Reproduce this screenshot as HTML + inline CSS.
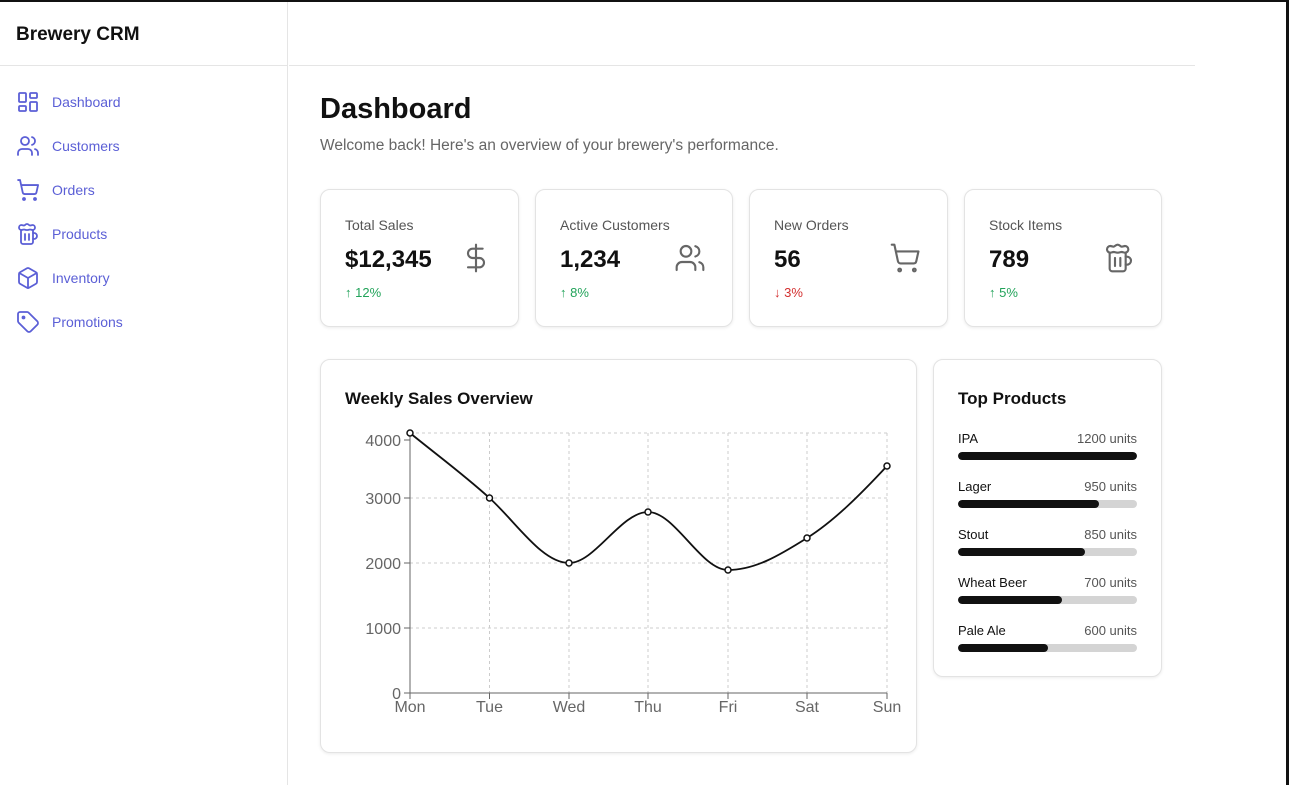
<!DOCTYPE html>
<html><head><meta charset="utf-8"><style>
*{box-sizing:border-box;margin:0;padding:0}
body{width:1289px;height:785px;overflow:hidden;background:#fff;font-family:"Liberation Sans",sans-serif;position:relative}
.frame-top{position:absolute;left:0;top:0;width:1289px;height:2px;background:#111}
.frame-right{position:absolute;right:0;top:0;width:3px;height:785px;background:#111}
.side{position:absolute;left:0;top:2px;width:288px;height:783px;border-right:1px solid #e5e5e5}
.brand{height:64px;border-bottom:1px solid #e5e5e5;font-weight:bold;font-size:19px;padding:22px 16px;color:#111}
.nav a{display:flex;align-items:center;height:44px;padding-left:16px;color:#5b5fd6;font-size:14px;text-decoration:none}
.nav a svg{width:24px;height:24px;margin-right:12px;stroke:#5b5fd6;fill:none;stroke-width:1.8;stroke-linecap:round;stroke-linejoin:round}
.nav{padding-top:14px}
.topbar{position:absolute;left:289px;top:2px;width:906px;height:64px;border-bottom:1px solid #e5e5e5}
h1{position:absolute;left:320px;top:93px;font-size:29px;font-weight:bold;color:#111}
.sub{position:absolute;left:320px;top:137px;font-size:15.5px;color:#666}
.card{position:absolute;background:#fff;border:1px solid #e3e3e3;border-radius:10px;box-shadow:0 1px 3px rgba(0,0,0,.08)}
.stat .l{position:absolute;left:24px;top:27px;font-size:14px;color:#555}
.stat .v{position:absolute;left:24px;top:56px;font-size:24px;font-weight:bold;color:#111}
.stat .c{position:absolute;left:24px;top:95px;font-size:13px}
.stat svg{position:absolute;right:26px;top:52px;width:32px;height:32px;stroke:#666;fill:none;stroke-width:1.6;stroke-linecap:round;stroke-linejoin:round}
.up{color:#22a35a}.down{color:#d32f2f}
.ttl{position:absolute;left:24px;top:29px;font-size:17px;font-weight:bold;color:#111}
.prod{position:absolute;left:24px;width:179px;font-size:13px}
.prod .n{color:#111}.prod .u{position:absolute;right:0;top:0;color:#555}
.bar{margin-top:6px;height:8px;background:#d4d4d4;border-radius:4px;overflow:hidden}
.bar div{height:8px;background:#111;border-radius:4px}
</style></head><body>
<div class="frame-top"></div><div class="frame-right"></div>
<div class="side">
<div class="brand">Brewery CRM</div>
<div class="nav">
<a><svg viewBox="0 0 24 24"><rect x="3" y="3" width="7" height="9" rx="1"/><rect x="14" y="3" width="7" height="5" rx="1"/><rect x="14" y="12" width="7" height="9" rx="1"/><rect x="3" y="16" width="7" height="5" rx="1"/></svg>Dashboard</a>
<a><svg viewBox="0 0 24 24"><path d="M16 21v-2a4 4 0 0 0-4-4H6a4 4 0 0 0-4 4v2"/><circle cx="9" cy="7" r="4"/><path d="M22 21v-2a4 4 0 0 0-3-3.87M16 3.13a4 4 0 0 1 0 7.75"/></svg>Customers</a>
<a><svg viewBox="0 0 24 24"><circle cx="8" cy="21" r="1"/><circle cx="19" cy="21" r="1"/><path d="M2.05 2.05h2l2.66 12.42a2 2 0 0 0 2 1.58h9.78a2 2 0 0 0 1.95-1.57l1.65-7.43H5.12"/></svg>Orders</a>
<a><svg viewBox="0 0 24 24"><path d="M17 11h1a3 3 0 0 1 0 6h-1M9 12v6M13 12v6M14 7.5c-1 0-1.44.5-3 .5s-2-.5-3-.5-1.72.5-2.5.5a2.5 2.5 0 0 1 0-5c.78 0 1.57.5 2.5.5S9.44 2 11 2s2 1.5 3 1.5 1.72-.5 2.5-.5a2.5 2.5 0 0 1 0 5c-.78 0-1.5-.5-2.5-.5Z"/><path d="M5 8v12a2 2 0 0 0 2 2h8a2 2 0 0 0 2-2V8"/></svg>Products</a>
<a><svg viewBox="0 0 24 24"><path d="M21 8a2 2 0 0 0-1-1.73l-7-4a2 2 0 0 0-2 0l-7 4A2 2 0 0 0 3 8v8a2 2 0 0 0 1 1.73l7 4a2 2 0 0 0 2 0l7-4A2 2 0 0 0 21 16Z"/><path d="m3.3 7 8.7 5 8.7-5M12 22V12"/></svg>Inventory</a>
<a><svg viewBox="0 0 24 24"><path d="M12.59 2.59A2 2 0 0 0 11.17 2H4a2 2 0 0 0-2 2v7.17a2 2 0 0 0 .59 1.42l8.7 8.7a2.43 2.43 0 0 0 3.42 0l6.58-6.58a2.43 2.43 0 0 0 0-3.42z"/><circle cx="7.5" cy="7.5" r="1"/></svg>Promotions</a>
</div></div>
<div class="topbar"></div>
<h1>Dashboard</h1>
<div class="sub">Welcome back! Here's an overview of your brewery's performance.</div>

<div class="card stat" style="left:320px;top:189px;width:199px;height:138px"><div class="l">Total Sales</div><div class="v">$12,345</div><div class="c up">↑ 12%</div>
<svg viewBox="0 0 24 24"><path d="M12 2v20M17 5H9.5a3.5 3.5 0 0 0 0 7h5a3.5 3.5 0 0 1 0 7H6"/></svg></div>
<div class="card stat" style="left:535px;top:189px;width:198px;height:138px"><div class="l">Active Customers</div><div class="v">1,234</div><div class="c up">↑ 8%</div>
<svg viewBox="0 0 24 24"><path d="M16 21v-2a4 4 0 0 0-4-4H6a4 4 0 0 0-4 4v2"/><circle cx="9" cy="7" r="4"/><path d="M22 21v-2a4 4 0 0 0-3-3.87M16 3.13a4 4 0 0 1 0 7.75"/></svg></div>
<div class="card stat" style="left:749px;top:189px;width:199px;height:138px"><div class="l">New Orders</div><div class="v">56</div><div class="c down">↓ 3%</div>
<svg viewBox="0 0 24 24"><circle cx="8" cy="21" r="1"/><circle cx="19" cy="21" r="1"/><path d="M2.05 2.05h2l2.66 12.42a2 2 0 0 0 2 1.58h9.78a2 2 0 0 0 1.95-1.57l1.65-7.43H5.12"/></svg></div>
<div class="card stat" style="left:964px;top:189px;width:198px;height:138px"><div class="l">Stock Items</div><div class="v">789</div><div class="c up">↑ 5%</div>
<svg viewBox="0 0 24 24"><path d="M17 11h1a3 3 0 0 1 0 6h-1M9 12v6M13 12v6M14 7.5c-1 0-1.44.5-3 .5s-2-.5-3-.5-1.72.5-2.5.5a2.5 2.5 0 0 1 0-5c.78 0 1.57.5 2.5.5S9.44 2 11 2s2 1.5 3 1.5 1.72-.5 2.5-.5a2.5 2.5 0 0 1 0 5c-.78 0-1.5-.5-2.5-.5Z"/><path d="M5 8v12a2 2 0 0 0 2 2h8a2 2 0 0 0 2-2V8"/></svg></div>

<div class="card" style="left:320px;top:359px;width:597px;height:394px"><div class="ttl">Weekly Sales Overview</div></div>
<svg style="position:absolute;left:0;top:0" width="1289" height="785">
<g stroke="#ccc" stroke-dasharray="3 3" fill="none">
<line x1="410" y1="433" x2="887" y2="433"/><line x1="410" y1="498" x2="887" y2="498"/><line x1="410" y1="563" x2="887" y2="563"/><line x1="410" y1="628" x2="887" y2="628"/>
<line x1="489.5" y1="433" x2="489.5" y2="693"/><line x1="569" y1="433" x2="569" y2="693"/><line x1="648" y1="433" x2="648" y2="693"/><line x1="728" y1="433" x2="728" y2="693"/><line x1="807" y1="433" x2="807" y2="693"/><line x1="887" y1="433" x2="887" y2="693"/>
</g>
<g stroke="#666" fill="none"><line x1="410" y1="433" x2="410" y2="693"/><line x1="410" y1="693" x2="887" y2="693"/>
<line x1="404" y1="440" x2="410" y2="440"/><line x1="404" y1="498" x2="410" y2="498"/><line x1="404" y1="563" x2="410" y2="563"/><line x1="404" y1="628" x2="410" y2="628"/><line x1="404" y1="693" x2="410" y2="693"/>
<line x1="410" y1="693" x2="410" y2="699"/><line x1="489.5" y1="693" x2="489.5" y2="699"/><line x1="569" y1="693" x2="569" y2="699"/><line x1="648" y1="693" x2="648" y2="699"/><line x1="728" y1="693" x2="728" y2="699"/><line x1="807" y1="693" x2="807" y2="699"/><line x1="887" y1="693" x2="887" y2="699"/></g>
<g font-family="Liberation Sans" font-size="16" fill="#666" text-anchor="end"><text x="401" y="446">4000</text><text x="401" y="504">3000</text><text x="401" y="569">2000</text><text x="401" y="634">1000</text><text x="401" y="699">0</text></g>
<g font-family="Liberation Sans" font-size="16" fill="#666" text-anchor="middle"><text x="410" y="712">Mon</text><text x="489.5" y="712">Tue</text><text x="569" y="712">Wed</text><text x="648" y="712">Thu</text><text x="728" y="712">Fri</text><text x="807" y="712">Sat</text><text x="887" y="712">Sun</text></g>
<path d="M410 433 C437 455 463 474 489.5 498 C516 522 542 563 569 563 C595 563 621 512 648 512 C675 512 701 570 728 570 C755 570 780 555 807 538 C834 521 860 495 887 466" fill="none" stroke="#111" stroke-width="1.8"/>
<g fill="#fff" stroke="#111" stroke-width="1.5"><circle cx="410" cy="433" r="3"/><circle cx="489.5" cy="498" r="3"/><circle cx="569" cy="563" r="3"/><circle cx="648" cy="512" r="3"/><circle cx="728" cy="570" r="3"/><circle cx="807" cy="538" r="3"/><circle cx="887" cy="466" r="3"/></g>
</svg>

<div class="card" style="left:933px;top:359px;width:229px;height:318px"><div class="ttl">Top Products</div>
<div class="prod" style="top:71px"><span class="n">IPA</span><span class="u">1200 units</span><div class="bar"><div style="width:100%"></div></div></div>
<div class="prod" style="top:119px"><span class="n">Lager</span><span class="u">950 units</span><div class="bar"><div style="width:79%"></div></div></div>
<div class="prod" style="top:167px"><span class="n">Stout</span><span class="u">850 units</span><div class="bar"><div style="width:71%"></div></div></div>
<div class="prod" style="top:215px"><span class="n">Wheat Beer</span><span class="u">700 units</span><div class="bar"><div style="width:58%"></div></div></div>
<div class="prod" style="top:263px"><span class="n">Pale Ale</span><span class="u">600 units</span><div class="bar"><div style="width:50%"></div></div></div>
</div>
</body></html>
